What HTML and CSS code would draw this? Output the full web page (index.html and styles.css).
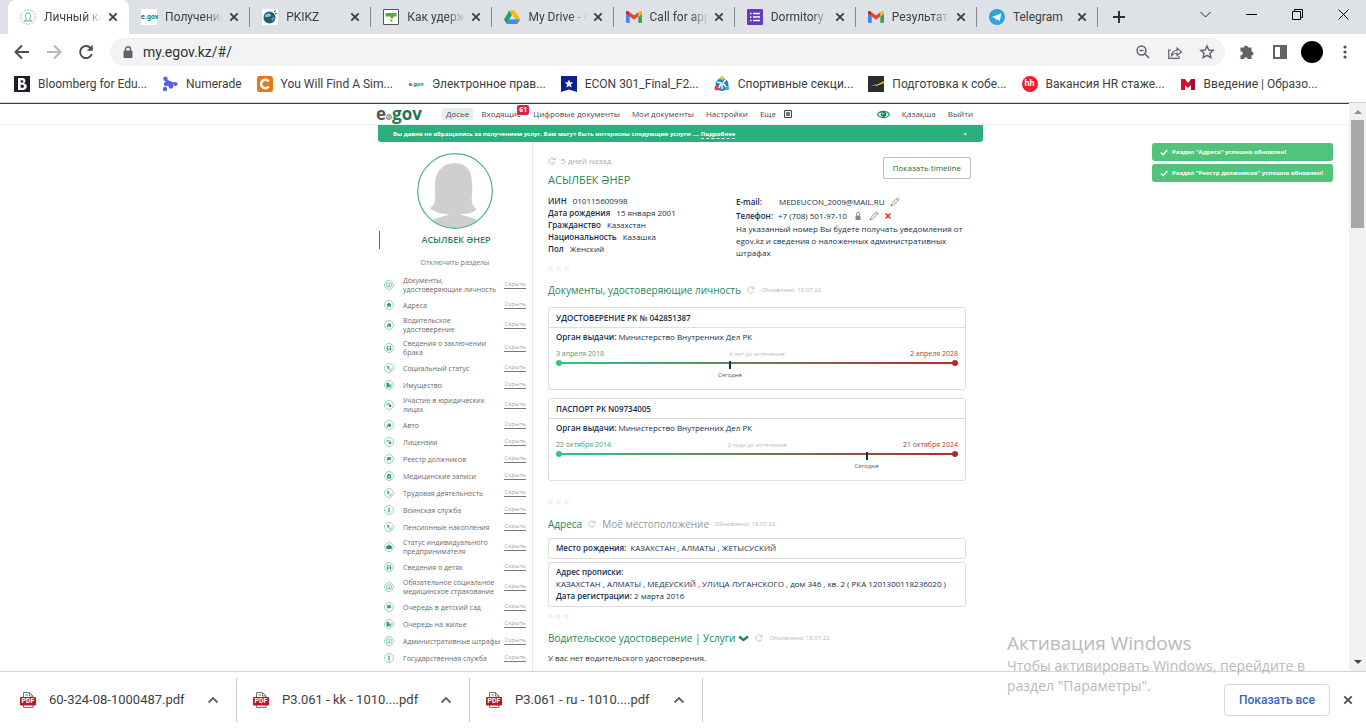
FILE: index.html
```html
<!DOCTYPE html>
<html lang="ru">
<head>
<meta charset="utf-8">
<title>Личный кабинет</title>
<link rel="stylesheet" href="styles.css">
</head>
<body>
<svg class="defs" aria-hidden="true">
  <symbol id="x" viewBox="0 0 10 10"><path d="M1.3 1.3l7.4 7.4M8.7 1.3L1.3 8.7" fill="none" stroke="currentColor" stroke-width="1.9"/></symbol>
  <symbol id="gmail" viewBox="0 0 16 12"><path d="M1 12h2.700V5.500L0 2.700V11a1 1 0 0 0 1 1z" fill="#4285f4"/><path d="M12.300 12H15a1 1 0 0 0 1-1V2.700l-3.700 2.800z" fill="#34a853"/><path d="M12.300 1.200v4.300L16 2.700V1.500C16 0 14.500-.3 13.500.4z" fill="#fbbc04"/><path d="M3.700 5.500V1.200L8 4.400l4.300-3.200v4.300L8 8.700z" fill="#ea4335"/><path d="M0 1.500v1.200l3.700 2.800V1.200L2.500.4C1.500-.3 0 0 0 1.500z" fill="#c5221f"/></symbol>
  <symbol id="pdf" viewBox="0 0 16 16"><path d="M3.500 5V.5h6L13 4v1M9.500.5V4H13M3.500 13v2.500H13V13M5.500 3h2.500" fill="none" stroke="#777" stroke-width="1"/><rect x="0" y="5" width="16" height="8.500" rx="1" fill="#c8101e"/></symbol>
  <symbol id="up" viewBox="0 0 12 8"><path d="M1.500 6.500L6 2l4.500 4.500" fill="none" stroke="#5f6368" stroke-width="1.900"/></symbol>
  <symbol id="ref" viewBox="0 0 10 10"><path d="M8.500 6.300A3.800 3.800 0 1 1 7.600 2.200M6 3.300h3V.8" fill="none" stroke="currentColor" stroke-width="1"/></symbol>
  <symbol id="pen" viewBox="0 0 10 10"><path d="M1 9l.8-2.500L7.500.9l1.600 1.500L3.400 8.200zM6.500 2l1.500 1.500" fill="none" stroke="#888" stroke-width=".9"/></symbol>
  <symbol id="s-doc" viewBox="0 0 10 10"><rect x="2.300" y="2.500" width="5.400" height="5" fill="none" stroke="#3fae83" stroke-width=".7"/><path d="M3.500 6.500h3M5 3.500v2" stroke="#3fae83" stroke-width=".9"/></symbol>
  <symbol id="s-home" viewBox="0 0 10 10"><path d="M5 2L1.900 5h1v2.700h1.500V6h1.200v1.700h1.500V5h1z" fill="#2a8f66"/></symbol>
  <symbol id="s-car" viewBox="0 0 10 10"><path d="M2.300 7.800V6l1.300-1.500L4.500 3h2.200l.6 1.500v3.300H5.900v-1H3.700v1z" fill="#2a8f66"/><circle cx="4" cy="5.800" r=".6" fill="#fff"/></symbol>
  <symbol id="s-pair" viewBox="0 0 10 10"><circle cx="3.400" cy="3" r=".9" fill="#2a8f66"/><circle cx="6.600" cy="3" r=".9" fill="#2a8f66"/><path d="M2.200 8V4.300h2V8zM5.800 8V4.300h2V8z" fill="#2a8f66"/></symbol>
  <symbol id="s-user" viewBox="0 0 10 10"><path d="M4 2.200a1.200 1.200 0 0 1 .6 2.200l1.200 1.200H2L3.400 4.400A1.200 1.200 0 0 1 4 2.200z" fill="#2a8f66"/><path d="M4.500 6.500L6 8h1.500V5.500" fill="none" stroke="#3fae83" stroke-width=".9"/></symbol>
  <symbol id="s-build" viewBox="0 0 10 10"><path d="M2 8V2.200h2.800V8zM5.300 8V4.300h2.700V8z" fill="#2a8f66"/><path d="M6.300 5.500h.8v2h-.8z" fill="#fff"/></symbol>
  <symbol id="s-case" viewBox="0 0 10 10"><path d="M1.800 3.800h6.400v3.600H1.800zM3.800 3.800v-1h2.400v1" fill="#2a8f66" stroke="#2a8f66" stroke-width=".5"/></symbol>
  <symbol id="s-lic" viewBox="0 0 10 10"><path d="M1.800 3h4.400M1.800 4.500h3" stroke="#3fae83" stroke-width=".9"/><circle cx="6.300" cy="6" r="1.700" fill="#2a8f66"/></symbol>
  <symbol id="s-flag" viewBox="0 0 10 10"><path d="M3 8V2.500M3 3h4.500l-1 1.400 1 1.400H3" fill="#2a8f66" stroke="#2a8f66" stroke-width=".6"/></symbol>
  <symbol id="s-med" viewBox="0 0 10 10"><path d="M2.300 3.500h1.500v-1h2.400v1h1.500V8H2.300z" fill="#2a8f66"/><path d="M5 4.300v2.800M3.600 5.700h2.800" stroke="#fff" stroke-width=".8"/></symbol>
  <symbol id="s-man" viewBox="0 0 10 10"><circle cx="5" cy="2.800" r="1" fill="#2a8f66"/><path d="M3.900 4.200h2.200l-.4 4.100H4.300z" fill="#3fae83"/></symbol>
</svg>

<header class="tabs">
  <nav class="tablist">
    <div class="tab active"><svg class="fav" viewBox="0 0 16 16"><circle cx="8" cy="8" r="7.300" fill="none" stroke="#6cc79c" stroke-width="1" stroke-dasharray="1.500 1.500"/><path d="M4 12c1-1 2.500-1 2.500-2C5 8.500 4.800 4 8 4s3 4.500 1.500 6c0 1 1.500 1 2.500 2z" fill="none" stroke="#58b98b"/></svg><span>Личный кабинет</span><button aria-label="Закрыть"><svg><use href="#x"/></svg></button></div>
    <div class="tab"><b class="fav egov"><i>e.</i>gov</b><span>Получение справки</span><button aria-label="Закрыть"><svg><use href="#x"/></svg></button></div>
    <div class="tab"><svg class="fav" viewBox="0 0 16 16"><path fill="#fff" d="M0 0h16v16H0z"/><circle cx="7.500" cy="8.500" r="6" fill="#245b78"/><path d="M3 6.500C5 4 8 4 9 5.500S7 8 5 8 3 9 3 6.500z" fill="#8fc4da"/><path d="M9 9.500l3-2 .8 2-2.500 2.500z" fill="#5d9dba"/><path d="M12 3l2-1.500M13 5l2-.5" stroke="#245b78"/></svg><span>PKIKZ</span><button aria-label="Закрыть"><svg><use href="#x"/></svg></button></div>
    <div class="tab"><svg class="fav" viewBox="0 0 16 16"><path fill="#fff" stroke="#555" d="M.5.500h15v15H.5z"/><path d="M2.500 4h11v3.500H11L9 10 7 7.500H2.500zM6 10l3.500 3.500-.2-2.500z" fill="#58ad3a"/></svg><span>Как удержать внимание</span><button aria-label="Закрыть"><svg><use href="#x"/></svg></button></div>
    <div class="tab"><svg class="fav" viewBox="0 0 16 16"><path d="M5.300 1.500h5.400L16 10h-5z" fill="#fbbc04"/><path d="M5.300 1.500L8 6l-5.300 9L0 10.500z" fill="#1ea362"/><path d="M5.300 10.300H16l-2.700 4.700H2.700z" fill="#4688f4"/><path d="M8 6l2.600 4.300H5.400z" fill="#dee1e6"/></svg><span>My Drive - Google</span><button aria-label="Закрыть"><svg><use href="#x"/></svg></button></div>
    <div class="tab"><svg class="fav"><use href="#gmail"/></svg><span>Call for applications</span><button aria-label="Закрыть"><svg><use href="#x"/></svg></button></div>
    <div class="tab"><svg class="fav" viewBox="0 0 16 16"><rect width="16" height="16" rx="1" fill="#673ab7"/><path d="M3 4.500h1.500M3 8h1.500M3 11.500h1.500M6 4.500h7M6 8h7M6 11.500h7" stroke="#fff" stroke-width="1.600"/></svg><span>Dormitory</span><button aria-label="Закрыть"><svg><use href="#x"/></svg></button></div>
    <div class="tab"><svg class="fav"><use href="#gmail"/></svg><span>Результаты</span><button aria-label="Закрыть"><svg><use href="#x"/></svg></button></div>
    <div class="tab short"><svg class="fav" viewBox="0 0 16 16"><circle cx="8" cy="8" r="8" fill="#2fa3dc"/><path d="M3 8l9.300-3.700-1.500 8-3-2.200-1.400 1.400-.3-2.400L10.500 6 5.300 9z" fill="#fff"/></svg><span>Telegram</span><button aria-label="Закрыть"><svg><use href="#x"/></svg></button></div>
  </nav>
  <button class="newtab" aria-label="Новая вкладка"><svg viewBox="0 0 12 12"><path d="M6 0v12M0 6h12" stroke="#333" stroke-width="2"/></svg></button>
  <div class="winctl">
    <button aria-label="Поиск вкладок"><svg viewBox="0 0 11 11"><path d="M.5 3L5.500 8l5-5" fill="none" stroke="#222"/></svg></button>
    <button aria-label="Свернуть"><svg viewBox="0 0 11 11"><path d="M0 5.500h11" stroke="#000"/></svg></button>
    <button aria-label="Окно"><svg viewBox="0 0 11 11"><path d="M.5 2.500h8v8h-8zM2.500 2.500v-2h8v8h-2" fill="none" stroke="#000"/></svg></button>
    <button aria-label="Закрыть окно"><svg viewBox="0 0 11 11"><path d="M.5.500l10 10M10.500.500l-10 10" stroke="#000"/></svg></button>
  </div>
</header>

<div class="toolbar">
  <button aria-label="Назад"><svg class="i16" viewBox="0 0 16 16"><path d="M15 8H2M8 1.500L1.500 8 8 14.500" fill="none" stroke="#4b4f54" stroke-width="2"/></svg></button>
  <button aria-label="Вперёд"><svg class="i16" viewBox="0 0 16 16"><path d="M1 8h13M8 1.500L14.500 8 8 14.500" fill="none" stroke="#b5b7ba" stroke-width="2"/></svg></button>
  <button aria-label="Обновить"><svg class="i16" viewBox="0 0 16 16"><path d="M13.800 10A6 6 0 1 1 12.500 4" fill="none" stroke="#4b4f54" stroke-width="2"/><path d="M14.800.8v6H8.800z" fill="#4b4f54"/></svg></button>
  <div class="omni">
    <svg class="lock" viewBox="0 0 10 12"><rect x=".5" y="4.500" width="9" height="7.500" rx="1" fill="#5f6368"/><path d="M2.500 5V3.200a2.500 2.500 0 0 1 5 0V5" fill="none" stroke="#5f6368" stroke-width="1.400"/></svg>
    <input aria-label="Адрес" value="my.egov.kz/#/">
    <button aria-label="Масштаб"><svg class="i14" viewBox="0 0 14 14"><circle cx="5.500" cy="5.500" r="4.400" fill="none" stroke="#5f6368" stroke-width="1.500"/><path d="M8.800 8.800L13 13M3.500 5.500h4" stroke="#5f6368" stroke-width="1.500"/></svg></button>
    <button aria-label="Поделиться"><svg class="i14" viewBox="0 0 14 14"><path d="M3 5H.7v8.300H11V11" fill="none" stroke="#5f6368" stroke-width="1.200"/><path d="M3.500 10.500c.3-3 2-5 5.500-5V3l4.500 3.900L9 10.500V8c-2.500 0-4 .7-5.500 2.500z" fill="none" stroke="#5f6368" stroke-width="1.200"/></svg></button>
    <button aria-label="В закладки"><svg class="i14" viewBox="0 0 14 14"><path d="M7 1l1.800 4 4.400.4-3.300 2.900 1 4.300L7 10.300l-3.900 2.300 1-4.300L.8 5.400 5.200 5z" fill="none" stroke="#5f6368" stroke-width="1.400"/></svg></button>
  </div>
  <div class="ext">
    <svg class="i16" viewBox="0 0 16 16"><path d="M5 3.500a2 2 0 1 1 4 0h3.500v4a2 2 0 1 1 0 4v3.500H8.700a1.800 1.800 0 1 0-3.600 0H1.500v-3.800a1.900 1.900 0 1 0 0-3.700v-4z" fill="#5f6368"/></svg>
    <svg class="i14" viewBox="0 0 14 14"><path d="M1 1h12v12H1zM8 1h5v12H8z" fill="none" stroke="#5f6368" stroke-width="2"/><path d="M8 1h5v12H8z" fill="#5f6368"/></svg>
    <span class="ava"></span>
    <svg class="dots" viewBox="0 0 4 14"><g fill="#4b4f54"><circle cx="2" cy="2" r="1.600"/><circle cx="2" cy="7" r="1.600"/><circle cx="2" cy="12" r="1.600"/></g></svg>
  </div>
</div>

<nav class="bookmarks">
  <a href="#"><svg class="fav" viewBox="0 0 16 16"><path fill="#1b2028" d="M0 0h16v16H0z"/><path d="M4 2h4.500a2.900 2.900 0 0 1 1.500 5.400A3.200 3.200 0 0 1 8.700 14H4zM6.700 4.200v2.400h1.500a1.200 1.200 0 0 0 0-2.400zm0 4.500v3h1.800a1.500 1.500 0 0 0 0-3z" fill="#fff" fill-rule="evenodd"/></svg><span>Bloomberg for Edu...</span></a>
  <a href="#"><svg class="fav" viewBox="0 0 16 16"><g fill="#5661e8"><circle cx="3.500" cy="2.700" r="2.200"/><circle cx="3" cy="13" r="2.200"/><circle cx="13.500" cy="8" r="2"/><circle cx="4" cy="8" r="2.200"/><circle cx="9" cy="10.300" r="2.400"/><path d="M3 3l10 4-4 4-5-2z"/></g></svg><span>Numerade</span></a>
  <a href="#"><svg class="fav" viewBox="0 0 16 16"><rect width="16" height="16" rx="2.500" fill="#e8791a"/><path d="M11.700 5.500A4.200 4.200 0 1 0 11.700 10.500" fill="none" stroke="#fff" stroke-width="2.600"/></svg><span>You Will Find A Sim...</span></a>
  <a href="#"><b class="fav egov plain"><i>e.</i>gov</b><span>Электронное прав...</span></a>
  <a href="#"><svg class="fav" viewBox="0 0 16 16"><path d="M0 0h16v16l-8-2.500L0 16z" fill="#0b1f8f"/><path d="M8 3.500l1.200 2.700 3 .3-2.300 2 .7 3L8 10l-2.600 1.500.7-3-2.300-2 3-.3z" fill="#fff"/></svg><span>ECON 301_Final_F2...</span></a>
  <a href="#"><svg class="fav" viewBox="0 0 16 16"><circle cx="8" cy="8.500" r="6.500" fill="#1f7fd0"/><circle cx="3" cy="12" r="2.500" fill="#d44"/><circle cx="8" cy="2" r="2" fill="#f0c04a"/><circle cx="13" cy="12" r="2.300" fill="#4aa8b8"/><path d="M3 6l4 1-2 5M12 3L9 7l3 4M8 8v5" fill="none" stroke="#fff" stroke-width="1.500"/></svg><span>Спортивные секци...</span></a>
  <a href="#"><svg class="fav" viewBox="0 0 16 16"><path fill="#272b36" d="M0 0h16v16H0z"/><path d="M2 10.500l6-2.300L8.500 9 16 5v2L8.300 10l-.6-.8z" fill="#f5d313"/></svg><span>Подготовка к собе...</span></a>
  <a href="#"><b class="fav hh">hh</b><span>Вакансия HR стаже...</span></a>
  <a href="#"><svg class="fav" viewBox="0 0 16 16"><path d="M1 3h4l3 4 3-4h4v11h-4V9l-3 3-3-3v5H1z" fill="#d3112f"/><path d="M11 3h4v11h-4z" fill="#a00b2b"/></svg><span>Введение | Образо...</span></a>
</nav>

<div class="view">
  <div class="page">
    <header class="sitehead">
      <div class="siteinner">
        <b class="logo"><i>e</i><svg viewBox="0 0 6 6"><circle cx="3" cy="3" r="2.400" fill="#fff" stroke="#555" stroke-width=".9"/><path d="M3 1.500v3" stroke="#555"/></svg>gov</b>
        <nav class="menu">
          <a class="on" href="#">Досье</a><a class="inbox" href="#">Входящие<em>61</em></a><a href="#">Цифровые документы</a><a href="#">Мои документы</a><a href="#">Настройки</a><a href="#">Еще<svg viewBox="0 0 8 8"><path d="M.5.500h7v7h-7z" fill="none" stroke="#444"/><path d="M2 2h4v4H2z" fill="#777"/></svg></a>
        </nav>
        <div class="lang"><svg viewBox="0 0 13 9"><path d="M.5 4.500C3 .3 10 .3 12.500 4.500 10 8.700 3 8.700.5 4.500z" fill="#fff" stroke="#198a5c" stroke-width="1.200"/><circle cx="6.500" cy="4.300" r="2.700" fill="#198a5c"/><circle cx="5.700" cy="3.600" r=".8" fill="#fff"/></svg><a href="#">Қазақша</a><a href="#">Выйти</a></div>
      </div>
    </header>
    <div class="wrap">
      <div class="banner"><span>Вы давно не обращались за получением услуг. Вам могут быть интересны следующие услуги .... <a href="#">Подробнее</a></span><button>×</button></div>
      <div class="cols">
        <aside class="side">
          <svg class="photo" viewBox="0 0 76 76"><defs><clipPath id="c"><circle cx="38" cy="38" r="37"/></clipPath></defs><g clip-path="url(#c)"><path d="M38 10c-13 0-19 9-20 20-.5 8 1 16-1 21-1 2-3 3-4 4 5 5 12 6 19 6-1 2-12 3-18 7v9h48v-9c-6-4-17-5-18-7 6 0 12-1 16-5-2-1-4-3-5-6-1-6 1-13 0-20C55 19 50 10 38 10z" fill="#cfcfcf"/></g><circle cx="38" cy="38" r="37.300" fill="none" stroke="#4db583" stroke-width="1.200"/></svg>
          <h2>АСЫЛБЕК ӘНЕР</h2>
          <a class="off" href="#">Отключить разделы</a>
          <ul>
            <li><svg><use href="#s-doc"/></svg><span>Документы, удостоверяющие личность</span><a href="#">Скрыть</a></li>
            <li><svg><use href="#s-home"/></svg><span>Адреса</span><a href="#">Скрыть</a></li>
            <li><svg><use href="#s-car"/></svg><span>Водительское удостоверение</span><a href="#">Скрыть</a></li>
            <li><svg><use href="#s-pair"/></svg><span>Сведения о заключении брака</span><a href="#">Скрыть</a></li>
            <li><svg><use href="#s-user"/></svg><span>Социальный статус</span><a href="#">Скрыть</a></li>
            <li><svg><use href="#s-build"/></svg><span>Имущество</span><a href="#">Скрыть</a></li>
            <li><svg><use href="#s-lic"/></svg><span>Участие в юридических лицах</span><a href="#">Скрыть</a></li>
            <li><svg><use href="#s-car"/></svg><span>Авто</span><a href="#">Скрыть</a></li>
            <li><svg><use href="#s-lic"/></svg><span>Лицензии</span><a href="#">Скрыть</a></li>
            <li><svg><use href="#s-flag"/></svg><span>Реестр должников</span><a href="#">Скрыть</a></li>
            <li><svg><use href="#s-med"/></svg><span>Медицинские записи</span><a href="#">Скрыть</a></li>
            <li><svg><use href="#s-user"/></svg><span>Трудовая деятельность</span><a href="#">Скрыть</a></li>
            <li><svg><use href="#s-man"/></svg><span>Воинская служба</span><a href="#">Скрыть</a></li>
            <li><svg><use href="#s-user"/></svg><span>Пенсионные накопления</span><a href="#">Скрыть</a></li>
            <li><svg><use href="#s-case"/></svg><span>Статус индивидуального предпринимателя</span><a href="#">Скрыть</a></li>
            <li><svg><use href="#s-pair"/></svg><span>Сведения о детях</span><a href="#">Скрыть</a></li>
            <li><svg><use href="#s-doc"/></svg><span>Обязательное социальное медицинское страхование</span><a href="#">Скрыть</a></li>
            <li><svg><use href="#s-flag"/></svg><span>Очередь в детский сад</span><a href="#">Скрыть</a></li>
            <li><svg><use href="#s-build"/></svg><span>Очередь на жилье</span><a href="#">Скрыть</a></li>
            <li><svg><use href="#s-doc"/></svg><span>Административные штрафы</span><a href="#">Скрыть</a></li>
            <li><svg><use href="#s-man"/></svg><span>Государственная служба</span><a href="#">Скрыть</a></li>
          </ul>
        </aside>
        <main>
          <div class="top">
            <div><p class="ago"><svg><use href="#ref"/></svg>5 дней назад</p><h1>АСЫЛБЕК ӘНЕР</h1></div>
            <button>Показать timeline</button>
          </div>
          <div class="info">
            <div class="facts">
              <p><b>ИИН</b>010115600998</p>
              <p><b>Дата рождения</b>15 января 2001</p>
              <p><b>Гражданство</b>Казахстан</p>
              <p><b>Национальность</b>Казашка</p>
              <p><b>Пол</b>Женский</p>
            </div>
            <div class="contact">
              <p class="row"><b class="mail">E-mail:</b>MEDEUCON_2009@MAIL.RU<svg><use href="#pen"/></svg></p>
              <p class="row"><b>Телефон:</b>+7 (708) 501-97-10<svg viewBox="0 0 10 10"><path d="M2.500 4.500h5V9h-5z" fill="#888"/><path d="M3.500 4.500V2.800a1.500 1.500 0 0 1 3 0v1.700" fill="none" stroke="#888" stroke-width=".9"/></svg><svg><use href="#pen"/></svg><svg class="del" viewBox="0 0 10 10"><path d="M2.500 2.500l5 5M7.500 2.500l-5 5" stroke="#e11" stroke-width="1.200"/></svg></p>
              <p>На указанный номер Вы будете получать уведомления от egov.kz и сведения о наложенных административных штрафах</p>
            </div>
          </div>
          <div class="rate"><i></i><i></i><i></i></div>
          <div class="title"><h3>Документы, удостоверяющие личность</h3><svg><use href="#ref"/></svg><small>Обновлено: 18.07.22</small></div>
          <section class="card doc">
            <h4>УДОСТОВЕРЕНИЕ РК № 042851387</h4>
            <p><b>Орган выдачи:</b> Министерство Внутренних Дел РК</p>
            <div class="dates"><span>3 апреля 2018</span><small>6 лет до истечения</small><span class="red">2 апреля 2028</span></div>
            <div class="line"><div class="now" style="left:43%"><span>Сегодня</span></div></div>
          </section>
          <section class="card doc">
            <h4>ПАСПОРТ РК N09734005</h4>
            <p><b>Орган выдачи:</b> Министерство Внутренних Дел РК</p>
            <div class="dates"><span>22 октября 2014</span><small>2 года до истечения</small><span class="red">21 октября 2024</span></div>
            <div class="line"><div class="now" style="left:77%"><span>Сегодня</span></div></div>
          </section>
          <div class="rate after"><i></i><i></i><i></i></div>
          <div class="title tight"><h3>Адреса</h3><svg><use href="#ref"/></svg><a href="#">Моё местоположение</a><small>Обновлено: 18.07.22</small></div>
          <section class="card addr"><p><b>Место рождения:</b>&nbsp; КАЗАХСТАН , АЛМАТЫ , ЖЕТЫСУСКИЙ</p></section>
          <section class="card addr"><p><b>Адрес прописки:</b></p><p>КАЗАХСТАН , АЛМАТЫ , МЕДЕУСКИЙ , УЛИЦА ЛУГАНСКОГО , дом 346 , кв. 2 ( РКА 1201300118236020 )</p><p><b>Дата регистрации:</b> 2 марта 2016</p></section>
          <div class="rate"><i></i><i></i><i></i></div>
          <div class="title"><h3>Водительское удостоверение | Услуги</h3><svg class="chev" viewBox="0 0 11 7"><path d="M1 1.500l4.500 3.500L10 1.500" fill="none" stroke="#25855a" stroke-width="2.400"/></svg><svg><use href="#ref"/></svg><small>Обновлено: 18.07.22</small></div>
          <p class="none">У вас нет водительского удостоверения.</p>
        </main>
      </div>
    </div>
    <div class="toasts">
      <div><svg viewBox="0 0 8 7"><path d="M.8 3.500L3 5.700 7.300 1" fill="none" stroke="#fff" stroke-width="1.400"/></svg>Раздел "Адреса" успешно обновлен!</div>
      <div><svg viewBox="0 0 8 7"><path d="M.8 3.500L3 5.700 7.300 1" fill="none" stroke="#fff" stroke-width="1.400"/></svg>Раздел "Реестр должников" успешно обновлен!</div>
    </div>
  </div>
  <div class="scroll"><svg viewBox="0 0 8 4"><path d="M0 4l4-4 4 4z" fill="#8f8f8f"/></svg><div class="thumb"></div><svg viewBox="0 0 8 4"><path d="M0 0l4 4 4-4z" fill="#444"/></svg></div>
</div>

<footer class="downloads">
  <div class="file"><span class="pdf"><svg><use href="#pdf"/></svg><b>PDF</b></span><span>60-324-08-1000487.pdf</span><button aria-label="Меню"><svg><use href="#up"/></svg></button></div>
  <div class="file"><span class="pdf"><svg><use href="#pdf"/></svg><b>PDF</b></span><span>P3.061 - kk - 1010....pdf</span><button aria-label="Меню"><svg><use href="#up"/></svg></button></div>
  <div class="file"><span class="pdf"><svg><use href="#pdf"/></svg><b>PDF</b></span><span>P3.061 - ru - 1010....pdf</span><button aria-label="Меню"><svg><use href="#up"/></svg></button></div>
  <button class="all">Показать все</button>
  <button class="closebar" aria-label="Закрыть панель"><svg><use href="#x"/></svg></button>
</footer>
<div class="activate"><h5>Активация Windows</h5><p>Чтобы активировать Windows, перейдите в раздел "Параметры".</p></div>
</body>
</html>
```
FILE: styles.css
```css
* { box-sizing: border-box; }
body { margin: 0; height: 100vh; overflow: hidden; display: flex; flex-direction: column; position: relative; background: #fff; color: #3c4043; font: 12px/16px Roboto, "Noto Sans", sans-serif; }
h1, h2, h3, h4, h5, p, ul { margin: 0; padding: 0; font-weight: 400; }
ul { list-style: none; }
button { border: 0; padding: 0; background: none; font: inherit; color: inherit; display: flex; align-items: center; justify-content: center; flex: none; }
a { color: inherit; text-decoration: none; }
svg { display: block; flex: none; overflow: visible; }
.defs { position: absolute; width: 0; height: 0; }
.fav { width: 16px; height: 16px; flex: none; }
.i16 { width: 16px; height: 16px; }
.i14 { width: 14px; height: 14px; }

/* tab strip */
.tabs { height: 34px; flex: none; background: #dee1e6; display: flex; padding-left: 8px; }
.tablist { display: flex; min-width: 0; flex: 0 1 1090px; }
.tab { flex: 1 1 0; min-width: 0; display: flex; align-items: center; gap: 8px; padding: 0 11px 0 12px; position: relative; }
.tab.active { background: #fff; border-radius: 8px 8px 0 0; color: #3c4043; }
.tab:not(.active)::after { content: ""; position: absolute; right: 0; top: 7px; height: 20px; width: 1px; background: #85888d; }
.tab span { flex: 1; min-width: 0; margin-right: -2px; overflow: hidden; white-space: nowrap; -webkit-mask-image: linear-gradient(90deg, #000 70%, transparent); mask-image: linear-gradient(90deg, #000 70%, transparent); }
.tab.short span { -webkit-mask-image: none; mask-image: none; }
.tab button svg { width: 10px; height: 10px; color: #3c4043; }
.egov { background: #fff; color: #178a55; font-size: 7px; line-height: 16px; text-align: center; }
.egov i { color: #555; font-style: normal; }
.egov.plain { font-size: 6px; }
.newtab { width: 42px; }
.newtab svg { width: 12px; height: 12px; }
.winctl { display: flex; margin-left: auto; height: 28px; }
.winctl button { width: 46px; }
.winctl svg { width: 11px; height: 11px; }

/* toolbar */
.toolbar { height: 36px; flex: none; display: flex; align-items: center; padding: 0 19px 0 14px; gap: 14px; }
.toolbar > button { margin-right: 2px; }
.omni { flex: 1; height: 28px; border-radius: 14px; background: #f1f3f4; display: flex; align-items: center; gap: 18px; padding: 0 11px 0 13px; }
.lock { width: 10px; height: 12px; margin-right: -8px; }
.omni input { flex: 1; min-width: 0; border: 0; padding: 0; background: none; font: 14px/20px Roboto, sans-serif; color: #303336; outline: 0; }
.ext { display: flex; align-items: center; gap: 18px; }
.ava { width: 22px; height: 22px; border-radius: 50%; background: #000; margin-left: -4px; }
.dots { width: 4px; height: 14px; margin-left: 2px; }

/* bookmarks */
.bookmarks { height: 33px; flex: none; display: flex; align-items: center; gap: 15px; padding: 0 14px 5px; border-bottom: 1px solid #cfd6d2; }
.bookmarks a { display: flex; align-items: center; gap: 8px; white-space: nowrap; }
.hh { border-radius: 50%; background: #f01f2b; color: #fff; font-size: 9px; line-height: 15px; text-align: center; }

/* web page */
.view { flex: 1; min-height: 0; display: flex; }
.page { flex: 1; min-width: 0; overflow: hidden; position: relative; border-top: 1px solid #333d3a; font: 8px/12px "Open Sans", "Noto Sans", sans-serif; color: #12304f; }
.sitehead { height: 21px; border-bottom: 1px solid #eee; }
.siteinner { width: 597px; margin: 0 auto; height: 20px; display: flex; align-items: center; color: #4a4a4a; white-space: nowrap; }
.logo { display: flex; align-items: center; color: #1d7a4c; font-size: 17px; line-height: 20px; width: 66px; }
.logo i { color: #555; font-style: normal; }
.logo svg { width: 6px; height: 6px; margin-top: 5px; }
.menu { display: flex; gap: 12px; }
.menu a { position: relative; display: flex; align-items: center; }
.menu .on { background: #e4efea; border-radius: 3px; padding: 0 4px; margin-right: -4px; }
.menu svg { width: 8px; height: 8px; margin-left: 8px; }
.inbox em { position: absolute; right: -8px; top: -3px; width: 12px; height: 10px; border-radius: 2px; background: #dc2149; color: #fff; font: 700 7px/10px "Open Sans", sans-serif; text-align: center; }
.lang { margin-left: auto; display: flex; align-items: center; gap: 12px; }
.lang svg { width: 13px; height: 9px; }
.wrap { width: 617px; margin: 0 auto; padding-left: 12px; }
.banner { height: 17px; padding: 0 16px 0 15px; border-radius: 0 0 3px 3px; background: #29b07e; color: #fff; font-size: 6px; font-weight: 700; display: flex; align-items: center; justify-content: space-between; }
.banner a { border-bottom: 1px dashed #fff; }
.cols { display: flex; }
.side { width: 155px; flex: none; border-right: 1px solid #e8e8e8; padding: 11px 0 10px; }
.photo { width: 76px; height: 76px; margin: 0 auto; }
.side h2 { margin: 2px 0 0 1px; border-left: 1px solid #25855a; font-size: 9px; line-height: 18px; color: #25855a; text-align: center; font-weight: 600; }
.off { display: block; margin: 8px 0 5px; text-align: center; font-size: 7px; color: #777; }
.side li { min-height: 17px; display: flex; align-items: center; padding: 2px 6px 3px; font-size: 7px; line-height: 9px; color: #6a6a6a; }
.side li svg { width: 10px; height: 10px; border-radius: 50%; border: 1px solid #9ad3ba; }
.side li span { flex: 1; margin: 0 2px 0 9px; }
.side li a { font-size: 6px; line-height: 7px; color: #a0a0a0; border-bottom: 1px solid #777; }
main { flex: 1; min-width: 0; padding: 13px 12px 0 15px; }
main b { font-weight: 600; }
.top { display: flex; justify-content: space-between; align-items: flex-start; }
.top button { height: 22px; margin-top: 2px; padding: 0 9px; border: 1px solid #bbb; border-radius: 2px; color: #2a6a2a; }
.ago { display: flex; align-items: center; gap: 5px; color: #aaa; }
.ago svg { width: 8px; height: 8px; }
h1 { font-size: 11px; line-height: 16px; margin-top: 5px; color: #25855a; }
.info { display: grid; grid-template-columns: 188px 1fr; margin-top: 7px; }
.facts b { margin-right: 6px; }
.contact { padding-right: 4px; }
.row { display: flex; align-items: center; height: 14px; gap: 6px; }
.row b { margin-right: -1px; }
.row .mail { margin-right: 11px; }
.row svg { width: 10px; height: 10px; }
.row .del { margin-left: -2px; }
.rate { display: flex; gap: 3px; height: 6px; margin-top: 7px; }
.rate i { width: 5px; height: 5px; border-radius: 50%; background: #eff4f2; }
.rate.after { margin-top: 19px; }
.title { display: flex; align-items: center; height: 16px; gap: 6px; margin: 10px 0 9px; color: #b5b5b5; font-size: 10px; }
.title.tight { margin-bottom: 6px; }
.title h3 { font-size: 10px; color: #25855a; }
.title svg { width: 8px; height: 8px; }
.title .chev { width: 11px; height: 7px; margin-left: -3px; }
.title small { font-size: 6px; }
.title a { color: #999; }
.card { border: 1px solid #ddd; border-radius: 3px; margin-right: 5px; padding: 0 7px; }
.doc { height: 83px; }
.doc + .doc { margin-top: 8px; }
.doc h4 { margin: 0 -7px; padding: 4px 7px 3px; border-bottom: 1px solid #ddd; font-weight: 600; }
.doc p { margin-top: 3px; }
.dates { display: grid; grid-template-columns: 1fr auto 1fr; font-size: 7px; line-height: 10px; color: #4f9a75; margin-top: 6px; }
.dates small { font-size: 6px; color: #b8b8b8; }
.red { text-align: right; color: #a04545; }
.line { height: 2px; margin: 3px 0 0; position: relative; background: linear-gradient(90deg, #2cc985, #b52a2a); }
.line::before, .line::after { content: ""; position: absolute; top: -2px; width: 6px; height: 6px; border-radius: 50%; background: #2cc985; left: 0; }
.line::after { left: auto; right: 0; background: #b52a2a; }
.now { position: absolute; top: -1px; width: 2px; height: 8px; background: #12304f; display: flex; justify-content: center; }
.now span { margin-top: 10px; font-size: 6px; line-height: 8px; color: #555; }
.addr { padding-top: 3px; padding-bottom: 4px; }
.addr + .addr { margin-top: 3px; }
.none { color: #333; margin-top: -3px; }
.toasts { position: absolute; top: 39px; right: 16px; width: 181px; display: grid; grid-template-columns: 100%; gap: 3px; color: #fff; font-size: 6px; font-weight: 700; white-space: nowrap; }
.toasts div { height: 18px; display: flex; align-items: center; gap: 4px; padding-left: 8px; border-radius: 3px; background: #50c47b; }
.toasts svg { width: 8px; height: 7px; }

/* scrollbar */
.scroll { width: 17px; flex: none; background: #f1f1f1; display: flex; flex-direction: column; align-items: center; padding: 7px 0; }
.scroll svg { width: 8px; height: 4px; }
.thumb { width: 13px; height: 108px; margin: 6px 0 auto; background: #a8a8a8; }

/* downloads */
.downloads { height: 57px; flex: none; border-top: 1px solid #d5d5d5; display: flex; align-items: center; padding: 0 13px 0 4px; }
.file { width: 233px; height: 44px; border-right: 1px solid #ccc; display: flex; align-items: center; padding: 0 17px 0 16px; gap: 13px; font-size: 13px; white-space: nowrap; }
.file button { margin-left: auto; }
.file button svg { width: 12px; height: 8px; }
.pdf { width: 16px; height: 16px; position: relative; }
.pdf svg { width: 16px; height: 16px; }
.pdf b { position: absolute; left: 0; right: 0; top: 5px; font-size: 7px; line-height: 9px; text-align: center; color: #fff; }
.all { margin-left: auto; width: 106px; height: 32px; border: 1px solid #d5d8dc; border-radius: 4px; color: #3367c4; font-weight: 500; }
.closebar { margin-left: 13px; }
.closebar svg { width: 10px; height: 10px; color: #4b4f54; }
.activate { position: absolute; right: 49px; bottom: 32px; width: 310px; color: #b9b9b9; pointer-events: none; font-family: "Open Sans", sans-serif; }
.activate h5 { font-size: 19px; line-height: 25px; }
.activate p { font-size: 14px; line-height: 20px; }
```
